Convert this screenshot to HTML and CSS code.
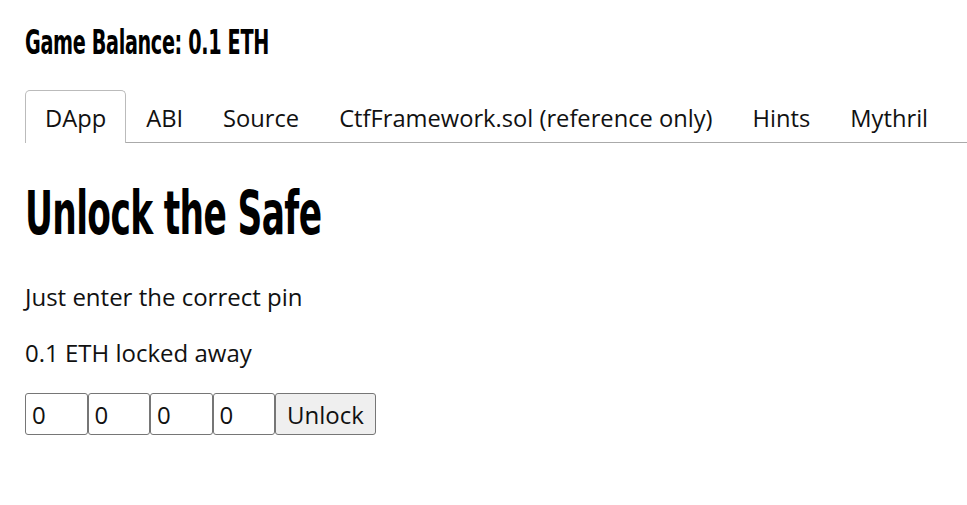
FILE: index.html
```html
<!DOCTYPE html>
<html>
<head>
<meta charset="utf-8">
<link rel="stylesheet" href="styles.css">
</head>
<body>
<div class="page">
  <h2 class="balance"><span class="squeeze">Game Balance: 0.1 ETH</span></h2>
  <ul class="tabs">
    <li class="tab active">DApp</li>
    <li class="tab">ABI</li>
    <li class="tab">Source</li>
    <li class="tab">CtfFramework.sol (reference only)</li>
    <li class="tab">Hints</li>
    <li class="tab">Mythril</li>
  </ul>
  <h1 class="title"><span class="squeeze">Unlock the Safe</span></h1>
  <p class="text">Just enter the correct pin</p>
  <p class="text">0.1 ETH locked away</p>
  <div class="form">
    <input class="pin" type="text" value="0">
    <input class="pin" type="text" value="0">
    <input class="pin" type="text" value="0">
    <input class="pin" type="text" value="0">
    <button class="btn">Unlock</button>
  </div>
</div>
</body>
</html>
```
FILE: styles.css
```css
html, body {
  margin: 0;
  padding: 0;
  background: #fff;
}
body {
  font-family: "Open Sans", sans-serif;
  color: #111;
}
.page {
  padding: 0 0 0 25px;
}
.balance {
  font-family: "DejaVu Sans", sans-serif;
  font-stretch: condensed;
  font-weight: bold;
  font-size: 33px;
  letter-spacing: -0.5px;
  margin: 0;
  padding-top: 24px;
  line-height: 38px;
  color: #000;
}
.squeeze {
  display: inline-block;
  transform-origin: left center;
  white-space: nowrap;
}
.balance .squeeze {
  transform: scaleX(0.646);
}
.title .squeeze {
  transform: scaleX(0.638);
}
.tabs {
  list-style: none;
  margin: 28px 0 0 0;
  padding: 0;
  display: flex;
  border-bottom: 1px solid #aaa;
}
.tab {
  font-size: 23.7px;
  padding: 0 19px;
  height: 51px;
  line-height: 54px;
  border: 1px solid transparent;
  border-bottom: none;
  border-radius: 5px 5px 0 0;
  margin-bottom: -1px;
  color: #111;
}
.tab.active {
  border-color: #bbb;
  background: #fff;
  height: 52px;
}
.title {
  font-family: "DejaVu Sans", sans-serif;
  font-stretch: condensed;
  font-weight: bold;
  font-size: 60px;
  letter-spacing: -1px;
  margin: 30px 0 0 0;
  line-height: 80px;
  color: #000;
}
.text {
  font-size: 24px;
  margin: 0;
  line-height: 56px;
}
.text:first-of-type {
  margin-top: 16px;
}
.form {
  display: flex;
  margin-top: 12px;
}
.pin {
  width: 62.5px;
  height: 42px;
  box-sizing: border-box;
  font-family: "Open Sans", sans-serif;
  font-size: 24px;
  border: 1px solid #767676;
  border-radius: 3px;
  padding: 0 6px;
  margin: 0;
  color: #111;
}
.btn {
  width: 101px;
  height: 42px;
  box-sizing: border-box;
  font-family: "Open Sans", sans-serif;
  font-size: 24px;
  border: 1px solid #767676;
  border-radius: 3px;
  background: #efefef;
  padding: 0;
  color: #111;
}
```
